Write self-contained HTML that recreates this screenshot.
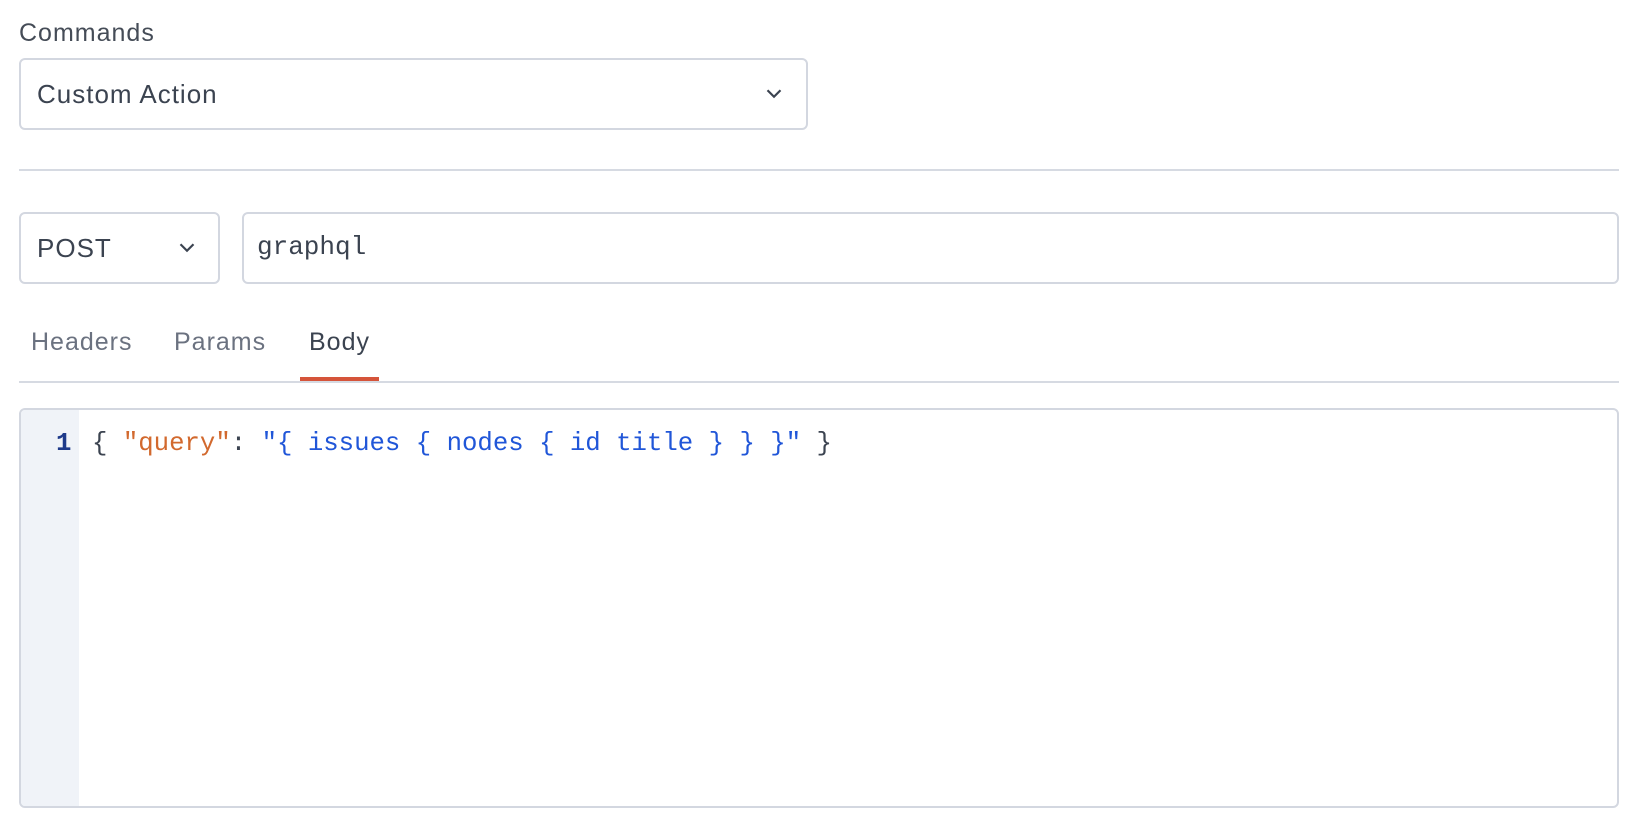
<!DOCTYPE html>
<html><head><style>
body{margin:0;background:#fff;width:1638px;height:828px;overflow:hidden;font-family:"Liberation Sans",sans-serif;color:#3b4350;position:relative}
.a{position:absolute;white-space:pre}
.box{position:absolute;border:2px solid #d3d7e0;border-radius:6px;box-sizing:border-box;background:#fff}
.chev{position:absolute}
.s{letter-spacing:1px}
</style></head><body>
<div class="a s" style="left:19px;top:19px;font-size:25px;color:#454c57">Commands</div>
<div class="box" style="left:19px;top:58px;width:789px;height:72px"></div>
<div class="a s" style="left:37px;top:79px;font-size:26px;color:#3b4350">Custom Action</div>
<svg class="chev" style="left:765px;top:87px" width="18" height="13" viewBox="0 0 16 12"><path d="M2 3l6 6 6-6" fill="none" stroke="#3b4350" stroke-width="2"/></svg>
<div class="a" style="left:19px;top:169px;width:1600px;height:2px;background:#d6dae2"></div>
<div class="box" style="left:19px;top:212px;width:201px;height:72px"></div>
<div class="a s" style="left:37px;top:233px;font-size:26px">POST</div>
<svg class="chev" style="left:178px;top:241px" width="18" height="13" viewBox="0 0 16 12"><path d="M2 3l6 6 6-6" fill="none" stroke="#3b4350" stroke-width="2"/></svg>
<div class="box" style="left:242px;top:212px;width:1377px;height:72px"></div>
<div class="a" style="left:257px;top:232px;font-family:'Liberation Mono',monospace;font-size:26px;color:#3b4350">graphql</div>
<div class="a s" style="left:31px;top:328px;font-size:25px;color:#6b7280">Headers</div>
<div class="a s" style="left:174px;top:328px;font-size:25px;color:#6b7280">Params</div>
<div class="a s" style="left:309px;top:328px;font-size:25px;color:#3b4350">Body</div>
<div class="a" style="left:19px;top:381px;width:1600px;height:2px;background:#d6dae2"></div>
<div class="a" style="left:300px;top:377px;width:79px;height:4px;background:#d5543a"></div>
<div class="box" style="left:19px;top:408px;width:1600px;height:400px;overflow:hidden">
<div class="a" style="left:0;top:0;width:58px;height:100%;background:#f0f3f8"></div>
</div>
<div class="a" style="left:56px;top:429px;font-family:'Liberation Mono',monospace;font-size:25.7px;font-weight:bold;color:#1e3a8a">1</div>
<div class="a" style="left:92px;top:429px;font-family:'Liberation Mono',monospace;font-size:25.7px;color:#3b4350">{ <span style="color:#d2692e">"query"</span>: <span style="color:#2056d8">"{ issues { nodes { id title } } }"</span> }</div>
</body></html>
